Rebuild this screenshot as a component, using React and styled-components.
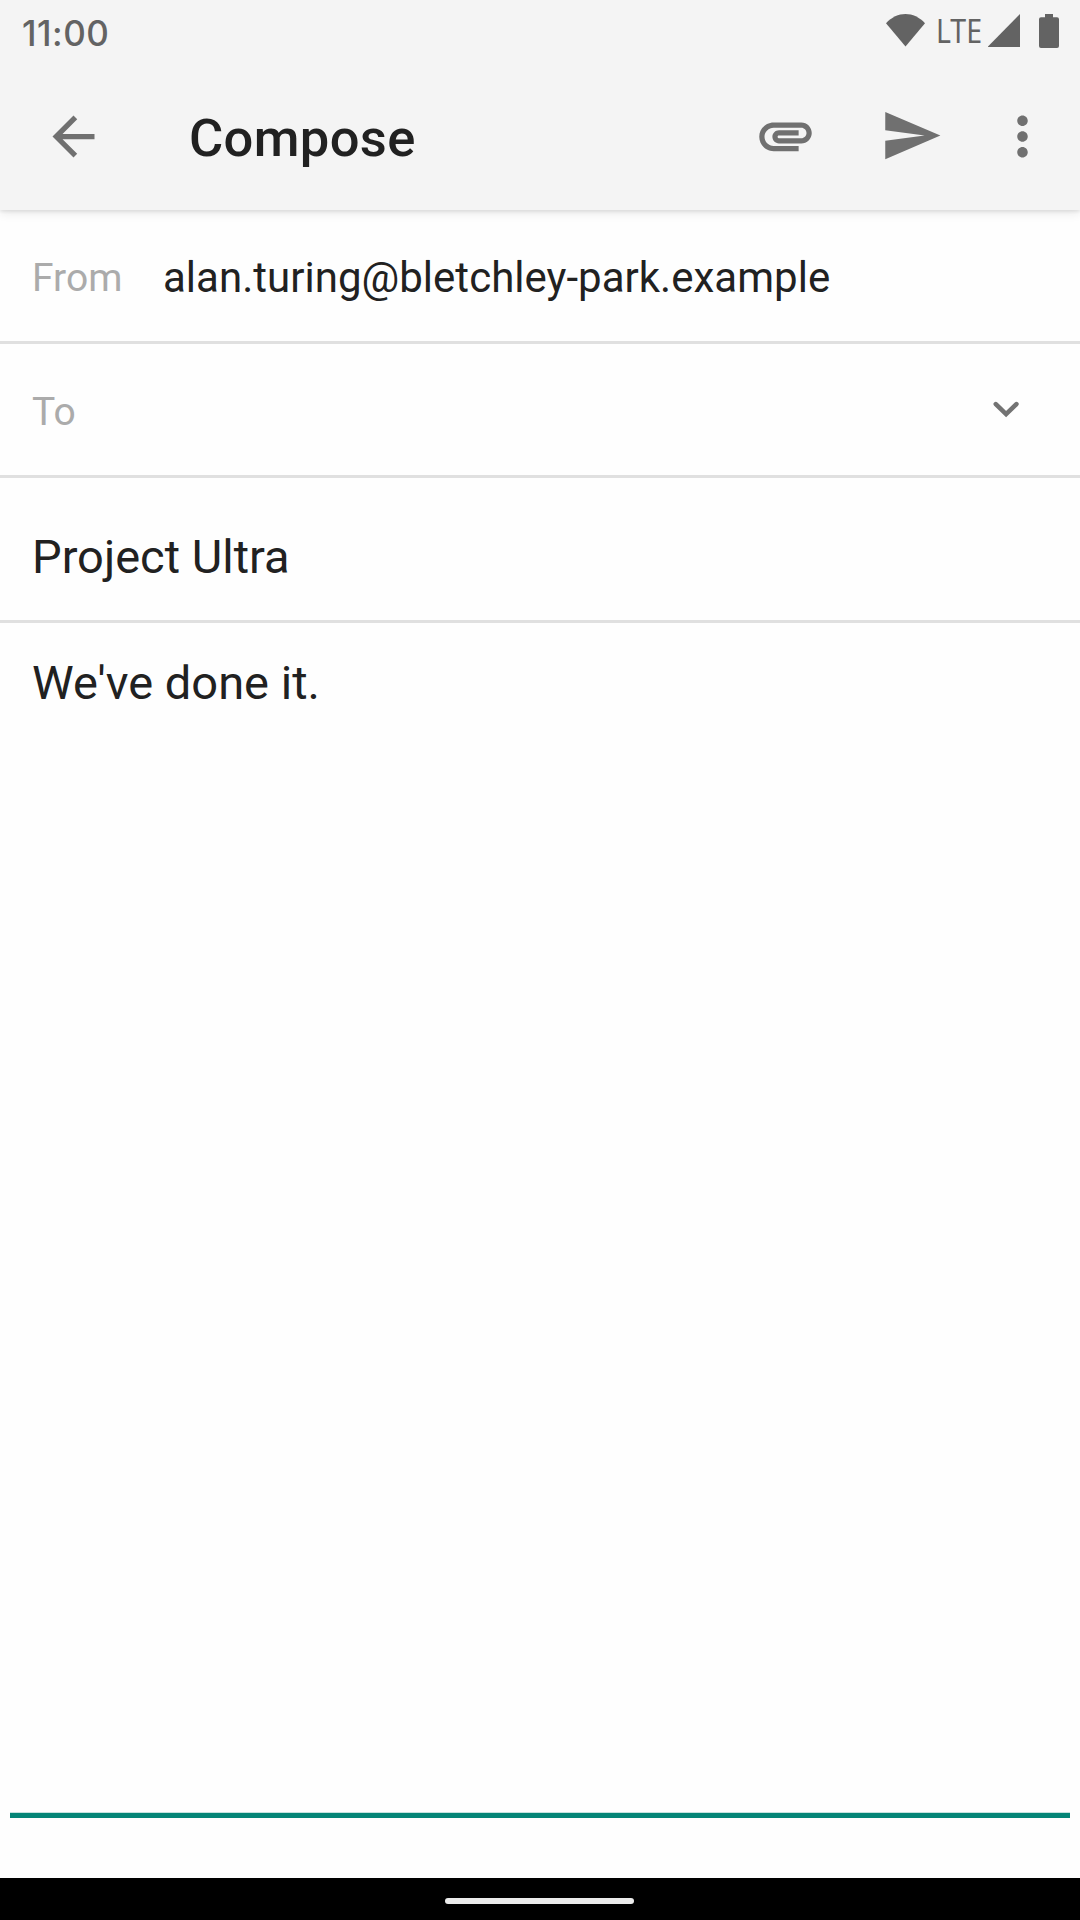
import React from "react";
import styled, { createGlobalStyle } from "styled-components";

const GlobalStyle = createGlobalStyle`
  * { box-sizing: border-box; }
  body { margin: 0; background: #fefefe; }
`;

const Screen = styled.div`
  display: flex;
  flex-direction: column;
  width: 1080px;
  height: 1920px;
  overflow: hidden;
  background: #fefefe;
  color: #212121;
  font-family: Roboto, "Liberation Sans", sans-serif;
`;

const Header = styled.header`
  position: relative;
  z-index: 1;
  flex: none;
  height: 210px;
  background: #f4f4f4;
  box-shadow: 0 2px 3px rgba(0, 0, 0, 0.07), 0 3px 10px rgba(0, 0, 0, 0.09);
`;

const StatusBar = styled.div`
  display: flex;
  justify-content: space-between;
  height: 63px;
  padding: 0 21px 0 22px;
  color: #636363;
`;

const Clock = styled.time`
  font: 500 35px/40px Inter, Roboto, sans-serif;
  letter-spacing: 0.5px;
  padding-top: 13px;
`;

const StatusIcons = styled.div`
  display: flex;
  align-items: flex-start;
  padding-top: 14px;
`;

const Network = styled.span`
  width: 47px;
  margin-left: 11px;
  font: 400 32.4px/32px "Noto Sans", sans-serif;
  transform: scaleX(0.88);
  transform-origin: left;
`;

const Glyph = styled.svg`
  display: block;
  flex: none;
  width: ${(p) => p.$w}px;
  height: ${(p) => p.$h}px;
  margin-left: ${(p) => p.$gap || 0}px;
  fill: currentColor;
`;

const Toolbar = styled.div`
  display: flex;
  align-items: center;
  height: 147px;
  padding: 0 26px 0 42px;
  color: #707070;
`;

const Title = styled.h1`
  flex: 1;
  margin: 0;
  padding: 3px 0 0 84px;
  color: #212121;
  font-size: 52.5px;
  font-weight: 500;
  letter-spacing: 0.35px;
  line-height: 62px;
`;

const IconButton = styled.button`
  display: block;
  width: 63px;
  height: 63px;
  margin: 0 0 ${(p) => p.$lift || 0}px ${(p) => p.$gap || 0}px;
  padding: 0;
  border: 0;
  background: none;
  color: inherit;
`;

const Field = styled.div`
  display: flex;
  flex: none;
  align-items: center;
  height: ${(p) => p.$height}px;
  padding: ${(p) => p.$top}px 59px 0 32px;
  border-bottom: 3px solid #e0e0e0;
`;

const Label = styled.label`
  width: 131px;
  color: #ababab;
  font-size: 39px;
  line-height: 50px;
`;

const Address = styled.span`
  font-size: 42px;
  letter-spacing: 0.02px;
  line-height: 50px;
`;

const Subject = styled.span`
  font-size: 47px;
  line-height: 56px;
`;

const Expand = styled.button`
  margin: 0 0 4px auto;
  padding: 0;
  border: 0;
  background: none;
  color: #737373;
`;

const Message = styled.main`
  flex: 1;
  margin: 0 10px 60px;
  padding: 32px 22px 0;
  border-bottom: 5px solid #048577;
  box-shadow: inset 0 -1px 0 #c4e2df;
  font-size: 47px;
  line-height: 56px;
`;

const NavigationBar = styled.footer`
  display: flex;
  flex: none;
  height: 42px;
  padding: 20px 0 0 445px;
  background: #000;
`;

const HomeHandle = styled.div`
  width: 189px;
  height: 6px;
  border-radius: 3px;
  background: #ebebeb;
`;

const paths = {
  back: "M20 11H7.83l5.59-5.59L12 4l-8 8 8 8 1.41-1.41L7.83 13H20v-2z",
  attach:
    "M2 12.5C2 9.46 4.46 7 7.5 7H18c2.21 0 4 1.79 4 4s-1.79 4-4 4H9.5C8.12 15 7 13.88 7 12.5S8.12 10 9.5 10H17v2H9.41c-.55 0-.55 1 0 1H18c1.1 0 2-.9 2-2s-.9-2-2-2H7.5C5.57 9 4 10.57 4 12.5S5.57 16 7.5 16H17v2H7.5C4.46 18 2 15.54 2 12.5z",
  send: "M2.01 21L23 12 2.01 3 2 10l15 2-15 2z",
  more: "M12 8c1.1 0 2-.9 2-2s-.9-2-2-2-2 .9-2 2 .9 2 2 2zm0 2c-1.1 0-2 .9-2 2s.9 2 2 2 2-.9 2-2-.9-2-2-2zm0 6c-1.1 0-2 .9-2 2s.9 2 2 2 2-.9 2-2-.9-2-2-2z",
};

function Action({ name, label, gap, lift }) {
  return (
    <IconButton aria-label={label} $gap={gap} $lift={lift}>
      <Glyph $w={63} $h={63} viewBox="0 0 24 24">
        <path d={paths[name]} />
      </Glyph>
    </IconButton>
  );
}

export default function App() {
  return (
    <>
      <GlobalStyle />
      <Screen>
        <Header>
          <StatusBar>
            <Clock>11:00</Clock>
            <StatusIcons>
              <Glyph $w={39} $h={33} viewBox="0 0 39 33">
                <path d="M0 9.2C5.5 3.2 12.5 0 19.5 0S33.5 3.2 39 9.2L19.5 32.6z" />
              </Glyph>
              <Network>LTE</Network>
              <Glyph $w={33} $h={33} $gap={5} viewBox="0 0 33 33">
                <path d="M32 0v33H-.4z" />
              </Glyph>
              <Glyph $w={20} $h={34} $gap={18} viewBox="0 0 20 34">
                <path d="M6 0h8v3.3h4Q20 3.3 20 5.3V32q0 2-2 2H2q-2 0-2-2V5.3Q0 3.3 2 3.3h4z" />
              </Glyph>
            </StatusIcons>
          </StatusBar>
          <Toolbar>
            <Action name="back" label="Back" />
            <Title>Compose</Title>
            <Action name="attach" label="Attach file" lift={2} />
            <Action name="send" label="Send" gap={63} lift={2} />
            <Action name="more" label="More options" gap={48} />
          </Toolbar>
        </Header>
        <Field $height={134} $top={4}>
          <Label>From</Label>
          <Address>alan.turing@bletchley-park.example</Address>
        </Field>
        <Field $height={134} $top={4}>
          <Label>To</Label>
          <Expand aria-label="Add recipients">
            <Glyph $w={30} $h={20} viewBox="991 400 30 20">
              <path
                d="M995.8 404.1l10.3 10 10.3-10"
                fill="none"
                stroke="currentColor"
                strokeWidth="4.6"
                strokeLinecap="round"
              />
            </Glyph>
          </Expand>
        </Field>
        <Field $height={145} $top={16}>
          <Subject>Project Ultra</Subject>
        </Field>
        <Message>We've done it.</Message>
        <NavigationBar>
          <HomeHandle />
        </NavigationBar>
      </Screen>
    </>
  );
}
